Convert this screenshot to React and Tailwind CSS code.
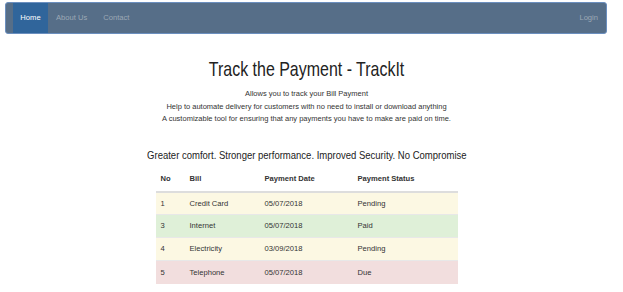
export default function App() {
  const rows = [
    { no: "1", bill: "Credit Card", date: "05/07/2018", status: "Pending", bg: "bg-[#fcf8e3]" },
    { no: "3", bill: "Internet", date: "05/07/2018", status: "Paid", bg: "bg-[#dff0d8]" },
    { no: "4", bill: "Electricity", date: "03/09/2018", status: "Pending", bg: "bg-[#fcf8e3]" },
    { no: "5", bill: "Telephone", date: "05/07/2018", status: "Due", bg: "bg-[#f2dede]" },
  ];
  return (
    <div className="w-[623px] h-[292px] bg-white overflow-hidden text-[#333]" style={{ fontFamily: '"Liberation Sans", Arial, sans-serif' }}>
      <div className="pt-[2px] pl-[5px] pr-[16px]">
        <nav className="h-[32px] bg-[#566e88] border border-[#6b8fbf] rounded-[3px] flex items-stretch pl-[7px] pr-[8px] text-[7.6px]">
          <div className="w-[35px] bg-[#30659b] text-white flex items-center justify-center">Home</div>
          <div className="ml-[8px] text-[#9ca8b5] flex items-center">About Us</div>
          <div className="ml-[16px] text-[#9ca8b5] flex items-center">Contact</div>
          <div className="ml-auto text-[#9ca8b5] flex items-center">Login</div>
        </nav>
      </div>
      <div className="w-[613px] flex flex-col items-center">
        <h1 className="mt-[22px] text-[21px] leading-[25px] text-[#222] whitespace-nowrap scale-x-[0.76]">Track the Payment - TrackIt</h1>
        <div className="mt-[7px] text-center text-[7.5px] leading-[12.5px] text-[#333]">
          <p>Allows you to track your Bill Payment</p>
          <p>Help to automate delivery for customers with no need to install or download anything</p>
          <p>A customizable tool for ensuring that any payments you have to make are paid on time.</p>
        </div>
        <h2 className="mt-[21px] text-[11.6px] leading-[16px] text-[#222] whitespace-nowrap scale-x-[0.82]">Greater comfort. Stronger performance. Improved Security. No Compromise</h2>
        <table className="mt-[5px] w-[302px] text-[7.6px] border-collapse">
          <thead>
            <tr className="h-[24px] border-b-[2px] border-[#ddd]">
              <th className="text-left font-bold pl-[5px] w-[34px]">No</th>
              <th className="text-left font-bold w-[75px]">Bill</th>
              <th className="text-left font-bold w-[93px]">Payment Date</th>
              <th className="text-left font-bold">Payment Status</th>
            </tr>
          </thead>
          <tbody>
            {rows.map((r, i) => (
              <tr key={i} className={`h-[23px] ${r.bg} border-t border-[#e8e8e8]`}>
                <td className="pl-[5px]">{r.no}</td>
                <td>{r.bill}</td>
                <td>{r.date}</td>
                <td>{r.status}</td>
              </tr>
            ))}
          </tbody>
        </table>
      </div>
    </div>
  );
}
